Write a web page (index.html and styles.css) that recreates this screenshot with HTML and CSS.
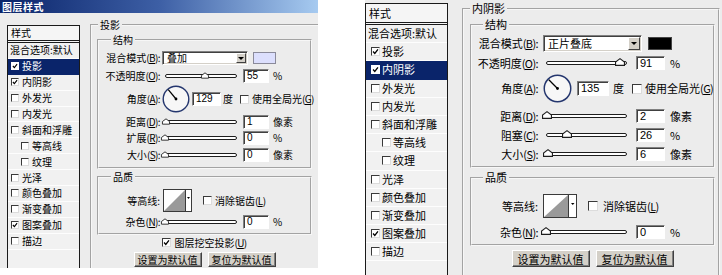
FILE: index.html
```html
<!DOCTYPE html>
<html lang="zh-CN">
<head>
<meta charset="utf-8">
<title>图层样式</title>
<link rel="stylesheet" href="styles.css">
</head>
<body>
<div class="page">
  <section class="dlg dlg-a">
    <div class="titlebar">图层样式</div>
    <div class="dlg-body">
      <div class="stylelist">
        <div class="sl-head">样式</div>
        <ul class="sl-items">
          <li class="sl-row plain">混合选项:默认</li>
          <li class="sl-row sel"><span class="cb"><svg viewBox="0 0 8 8"><path d="M1.2 4 L3.2 6.2 L6.8 1.6"/></svg></span>投影</li>
          <li class="sl-row"><span class="cb"><svg viewBox="0 0 8 8"><path d="M1.2 4 L3.2 6.2 L6.8 1.6"/></svg></span>内阴影</li>
          <li class="sl-row"><span class="cb"></span>外发光</li>
          <li class="sl-row"><span class="cb"></span>内发光</li>
          <li class="sl-row"><span class="cb"></span>斜面和浮雕</li>
          <li class="sl-row sub"><span class="cb"></span>等高线</li>
          <li class="sl-row sub"><span class="cb"></span>纹理</li>
          <li class="sl-row"><span class="cb"></span>光泽</li>
          <li class="sl-row"><span class="cb"></span>颜色叠加</li>
          <li class="sl-row"><span class="cb"></span>渐变叠加</li>
          <li class="sl-row"><span class="cb"><svg viewBox="0 0 8 8"><path d="M1.2 4 L3.2 6.2 L6.8 1.6"/></svg></span>图案叠加</li>
          <li class="sl-row"><span class="cb"></span>描边</li>
        </ul>
      </div>
      <fieldset class="grp outer">
        <legend>投影</legend>
        <fieldset class="grp box box-s">
          <legend>结构</legend>
          <div class="row r1"><span class="lbl">混合模式<span class="k">(<u>B</u>):</span></span><span class="select"><span class="sel-val">叠加</span><span class="drop"><i></i></span></span><span class="swatch sw-light"></span></div>
          <div class="row r2"><span class="lbl">不透明度<span class="k">(<u>O</u>):</span></span><span class="slider"><span class="rail"><span class="track"></span><svg class="thumb" style="left:55%" viewBox="0 0 9 7"><path d="M4.5 0.5 L8.5 3.5 V6.5 H0.5 V3.5 Z"/></svg></span></span><span class="num">55</span><span class="unit">%</span></div>
          <div class="row r3"><span class="lbl">角度<span class="k">(<u>A</u>):</span></span><svg class="dial" viewBox="0 0 28 28"><circle cx="14" cy="14" r="12.8"/><line x1="14" y1="14" x2="6.3" y2="4.6"/><circle class="dot" cx="14" cy="14" r="1.4"/></svg><span class="num num-ang">129</span><span class="unit u-deg">度</span><span class="cb opt-cb"></span><span class="opt-t">使用全局光<span class="k">(<u>G</u>)</span></span></div>
          <div class="row r4"><span class="lbl">距离<span class="k">(<u>D</u>):</span></span><span class="slider"><span class="rail"><span class="track"></span><svg class="thumb" style="left:1%" viewBox="0 0 9 7"><path d="M4.5 0.5 L8.5 3.5 V6.5 H0.5 V3.5 Z"/></svg></span></span><span class="num">1</span><span class="unit">像素</span></div>
          <div class="row r5"><span class="lbl">扩展<span class="k">(<u>R</u>):</span></span><span class="slider"><span class="rail"><span class="track"></span><svg class="thumb" style="left:0%" viewBox="0 0 9 7"><path d="M4.5 0.5 L8.5 3.5 V6.5 H0.5 V3.5 Z"/></svg></span></span><span class="num">0</span><span class="unit">%</span></div>
          <div class="row r6"><span class="lbl">大小<span class="k">(<u>S</u>):</span></span><span class="slider"><span class="rail"><span class="track"></span><svg class="thumb" style="left:0%" viewBox="0 0 9 7"><path d="M4.5 0.5 L8.5 3.5 V6.5 H0.5 V3.5 Z"/></svg></span></span><span class="num">0</span><span class="unit">像素</span></div>
        </fieldset>
        <fieldset class="grp box box-q">
          <legend>品质</legend>
          <div class="row q1"><span class="lbl">等高线:</span><svg class="contour" viewBox="0 0 29 23"><rect x="0.5" y="0.5" width="28" height="22" class="c-frame"/><polygon points="1,22 22,1 22,22" class="c-tri"/><line x1="22.5" y1="1" x2="22.5" y2="22" class="c-sep"/><polygon points="24,8 27,8 25.5,10" class="c-arr"/></svg><span class="cb opt-cb2"></span><span class="opt-t">消除锯齿<span class="k">(<u>L</u>)</span></span></div>
          <div class="row q2"><span class="lbl">杂色<span class="k">(<u>N</u>):</span></span><span class="slider"><span class="rail"><span class="track"></span><svg class="thumb" style="left:0%" viewBox="0 0 9 7"><path d="M4.5 0.5 L8.5 3.5 V6.5 H0.5 V3.5 Z"/></svg></span></span><span class="num">0</span><span class="unit">%</span></div>
        </fieldset>
        <div class="knock"><span class="cb"><svg viewBox="0 0 8 8"><path d="M1.2 4 L3.2 6.2 L6.8 1.6"/></svg></span><span class="opt-t">图层挖空投影<span class="k">(<u>U</u>)</span></span></div>
        <div class="btns"><button class="btn" type="button">设置为默认值</button><button class="btn" type="button">复位为默认值</button></div>
      </fieldset>
    </div>
  </section>

  <section class="dlg dlg-b">
    <div class="dlg-body">
      <div class="stylelist">
        <div class="sl-head">样式</div>
        <ul class="sl-items">
          <li class="sl-row plain">混合选项:默认</li>
          <li class="sl-row"><span class="cb"><svg viewBox="0 0 8 8"><path d="M1.2 4 L3.2 6.2 L6.8 1.6"/></svg></span>投影</li>
          <li class="sl-row sel"><span class="cb"><svg viewBox="0 0 8 8"><path d="M1.2 4 L3.2 6.2 L6.8 1.6"/></svg></span>内阴影</li>
          <li class="sl-row"><span class="cb"></span>外发光</li>
          <li class="sl-row"><span class="cb"></span>内发光</li>
          <li class="sl-row"><span class="cb"></span>斜面和浮雕</li>
          <li class="sl-row sub"><span class="cb"></span>等高线</li>
          <li class="sl-row sub"><span class="cb"></span>纹理</li>
          <li class="sl-row"><span class="cb"></span>光泽</li>
          <li class="sl-row"><span class="cb"></span>颜色叠加</li>
          <li class="sl-row"><span class="cb"></span>渐变叠加</li>
          <li class="sl-row"><span class="cb"><svg viewBox="0 0 8 8"><path d="M1.2 4 L3.2 6.2 L6.8 1.6"/></svg></span>图案叠加</li>
          <li class="sl-row"><span class="cb"></span>描边</li>
        </ul>
      </div>
      <fieldset class="grp outer">
        <legend>内阴影</legend>
        <fieldset class="grp box box-s">
          <legend>结构</legend>
          <div class="row r1"><span class="lbl">混合模式<span class="k">(<u>B</u>):</span></span><span class="select"><span class="sel-val">正片叠底</span><span class="drop"><i></i></span></span><span class="swatch sw-dark"></span></div>
          <div class="row r2"><span class="lbl">不透明度<span class="k">(<u>O</u>):</span></span><span class="slider"><span class="rail"><span class="track"></span><svg class="thumb" style="left:91%" viewBox="0 0 9 7"><path d="M4.5 0.5 L8.5 3.5 V6.5 H0.5 V3.5 Z"/></svg></span></span><span class="num">91</span><span class="unit">%</span></div>
          <div class="row r3"><span class="lbl">角度<span class="k">(<u>A</u>):</span></span><svg class="dial" viewBox="0 0 28 28"><circle cx="14" cy="14" r="12.8"/><line x1="14" y1="14" x2="5.6" y2="5.6"/><circle class="dot" cx="14" cy="14" r="1.4"/></svg><span class="num num-ang">135</span><span class="unit u-deg">度</span><span class="cb opt-cb"></span><span class="opt-t">使用全局光<span class="k">(<u>G</u>)</span></span></div>
          <div class="row r4"><span class="lbl">距离<span class="k">(<u>D</u>):</span></span><span class="slider"><span class="rail"><span class="track"></span><svg class="thumb" style="left:1%" viewBox="0 0 9 7"><path d="M4.5 0.5 L8.5 3.5 V6.5 H0.5 V3.5 Z"/></svg></span></span><span class="num">2</span><span class="unit">像素</span></div>
          <div class="row r5"><span class="lbl">阻塞<span class="k">(<u>C</u>):</span></span><span class="slider"><span class="rail"><span class="track"></span><svg class="thumb" style="left:26%" viewBox="0 0 9 7"><path d="M4.5 0.5 L8.5 3.5 V6.5 H0.5 V3.5 Z"/></svg></span></span><span class="num">26</span><span class="unit">%</span></div>
          <div class="row r6"><span class="lbl">大小<span class="k">(<u>S</u>):</span></span><span class="slider"><span class="rail"><span class="track"></span><svg class="thumb" style="left:3%" viewBox="0 0 9 7"><path d="M4.5 0.5 L8.5 3.5 V6.5 H0.5 V3.5 Z"/></svg></span></span><span class="num">6</span><span class="unit">像素</span></div>
        </fieldset>
        <fieldset class="grp box box-q">
          <legend>品质</legend>
          <div class="row q1"><span class="lbl">等高线:</span><svg class="contour" viewBox="0 0 34 24"><rect x="0.5" y="0.5" width="33" height="23" class="c-frame"/><polygon points="1,23 25,1 25,23" class="c-tri"/><line x1="25.5" y1="1" x2="25.5" y2="23" class="c-sep"/><polygon points="28,9 31.5,9 29.75,11" class="c-arr"/></svg><span class="cb opt-cb2"></span><span class="opt-t">消除锯齿<span class="k">(<u>L</u>)</span></span></div>
          <div class="row q2"><span class="lbl">杂色<span class="k">(<u>N</u>):</span></span><span class="slider"><span class="rail"><span class="track"></span><svg class="thumb" style="left:0%" viewBox="0 0 9 7"><path d="M4.5 0.5 L8.5 3.5 V6.5 H0.5 V3.5 Z"/></svg></span></span><span class="num">0</span><span class="unit">%</span></div>
        </fieldset>
        <div class="btns"><button class="btn" type="button">设置为默认值</button><button class="btn" type="button">复位为默认值</button></div>
      </fieldset>
    </div>
  </section>
</div>
</body>
</html>
```
FILE: styles.css
```css
* { box-sizing: border-box; }
html, body { margin: 0; padding: 0; background: #fff; }
body { font-family: "Noto Sans CJK SC", "Liberation Sans", sans-serif; color: #000; }

.page { display: flex; align-items: flex-start; width: 722px; height: 275px; overflow: hidden; }

.dlg { display: flex; flex-direction: column; flex: none; background: #ececec; overflow: hidden; }
.dlg-a { width: 318px; height: 268px; font-size: 10px; line-height: 12px; }
.dlg-b { width: 357px; height: 275px; margin-left: 47px; font-size: 11px; line-height: 13px; }

.titlebar {
  flex: none; height: 13px; padding-left: 2px;
  background: linear-gradient(90deg, #0a246a 0%, #3d5fa5 50%, #a6caf0 100%);
  color: #fff; font-weight: bold; font-size: 10px; line-height: 13px; letter-spacing: 0.5px;
}

.dlg-body { flex: 1; display: flex; align-items: stretch; min-height: 0; }
.dlg-a .dlg-body { padding: 6px 0 0 7px; }
.dlg-b .dlg-body { padding: 0 2px 0 0; }

.k { letter-spacing: -0.6px; }
.k u { text-decoration: underline; text-underline-offset: 1px; }

/* style list */
.stylelist { flex: none; display: flex; flex-direction: column; border: 1px solid #1a1a1a; border-bottom: none; background: #f1f1f1; }
.dlg-a .stylelist { width: 73px; margin-top: 6px; }
.dlg-b .stylelist { width: 83px; margin-top: 3px; }
.sl-head { border-bottom: 3px double #1a1a1a; padding-left: 3px; background: #f5f5f5; }
.dlg-a .sl-head { height: 17px; line-height: 14px; }
.dlg-b .sl-head { height: 21px; line-height: 18px; }
.sl-items { list-style: none; margin: 0; padding: 0; flex: 1; }
.sl-row { display: flex; align-items: center; white-space: nowrap; border-bottom: 1px solid #fdfdfd; }
.dlg-a .sl-row { height: 15.9px; padding-left: 3px; }
.dlg-b .sl-row { height: 18.2px; padding-left: 5px; }
.dlg-a .sl-row.sub { padding-left: 13px; }
.dlg-b .sl-row.sub { padding-left: 16px; }
.dlg-a .sl-row.plain, .dlg-b .sl-row.plain { padding-left: 2px; }
.dlg-a .sl-row .cb { margin-right: 3px; }
.dlg-b .sl-row .cb { margin-right: 2px; }
.sl-row.sel { background: #0a246a; color: #fff; border-bottom-color: #0a246a; }
.sl-row.sel .cb { border-color: #fff; }

/* checkbox */
.cb { display: inline-block; flex: none; background: #fff; border: 1px solid; border-color: #3a3a3a #dcdcdc #dcdcdc #3a3a3a; }
.dlg-a .cb { width: 8px; height: 8px; }
.dlg-b .cb { width: 9px; height: 9px; }
.cb svg { display: block; width: 100%; height: 100%; }
.cb path { fill: none; stroke: #000; stroke-width: 1.5; }

/* group boxes */
.grp { margin: 0; min-width: 0; border: 2px groove #f7f7f7; }
.grp > legend { padding: 0 2px; }
.outer { flex: 1; border-bottom: none; }
.dlg-a .outer { border-right: none; padding: 3px 6px 0 5px; margin-left: 10px; }
.dlg-b .outer { padding: 3px 3px 0 6px; margin-left: 14px; margin-top: 2px; }
.dlg-a .outer > legend { margin-left: 1px; }
.dlg-b .outer > legend { margin-left: 0; }
.dlg-a .box > legend { margin-left: 12px; }
.dlg-b .box > legend { margin-left: 11px; }

.dlg-a .box-s { padding: 5px 0 5px 0; }
.dlg-a .box-q { padding: 6px 0 4px 0; margin-top: 2px; }
.dlg-b .box-s { padding: 4px 0 5px 0; }
.dlg-b .box-q { padding: 10px 0 5px 0; margin-top: 3px; }

/* rows */
.row { display: flex; align-items: center; white-space: nowrap; }
.lbl { flex: none; text-align: right; }
.dlg-a .lbl { width: 61px; margin-right: 2px; }
.dlg-b .lbl { width: 66px; margin-right: 5px; }

.dlg-a .r1 { height: 14px; }
.dlg-a .r2 { height: 14px; margin-top: 4px; }
.dlg-a .r3 { height: 28px; margin-top: 2px; }
.dlg-a .r4 { height: 14px; margin-top: 2px; }
.dlg-a .r5 { height: 14px; margin-top: 2px; }
.dlg-a .r6 { height: 14px; margin-top: 3px; }
.dlg-a .q1 { height: 23px; }
.dlg-a .q2 { height: 14px; margin-top: 3px; }

.dlg-b .r1 { height: 17px; }
.dlg-b .r2 { height: 14px; margin-top: 4px; }
.dlg-b .r3 { height: 29px; margin-top: 4px; }
.dlg-b .r4 { height: 14px; margin-top: 6px; }
.dlg-b .r5 { height: 14px; margin-top: 5px; }
.dlg-b .r6 { height: 14px; margin-top: 5px; }
.dlg-b .q1 { height: 24px; }
.dlg-b .q2 { height: 14px; margin-top: 7px; }

/* select */
.select {
  flex: none; display: flex; align-items: stretch; height: 100%;
  background: #fff; border: 1px solid; border-color: #808080 #fff #fff #808080;
  box-shadow: inset 1px 1px 0 #404040, inset -1px -1px 0 #d4d0c8;
  padding: 1px;
}
.dlg-a .select { width: 86px; }
.dlg-b .select { width: 99px; }
.sel-val { flex: 1; padding-left: 3px; display: flex; align-items: center; }
.drop {
  flex: none; display: flex; align-items: center; justify-content: center;
  background: #d4d0c8; border: 1px solid; border-color: #fff #404040 #404040 #fff;
}
.dlg-a .drop { width: 10px; }
.dlg-b .drop { width: 12px; }
.drop i { display: block; width: 0; height: 0; border-left: 3px solid transparent; border-right: 3px solid transparent; border-top: 3px solid #000; }

.swatch { flex: none; border: 1px solid #8a8a9a; }
.dlg-a .swatch { width: 23px; height: 12px; margin-left: 5px; }
.dlg-b .swatch { width: 24px; height: 13px; margin-left: 6px; }
.sw-light { background: #dcdffd; }
.sw-dark { background: #000; border-color: #444; }

/* slider */
.slider { flex: none; display: flex; align-items: center; padding: 0 3px; }
.dlg-a .slider { width: 78px; }
.dlg-b .slider { width: 87px; }
.rail { position: relative; flex: 1; height: 4px; }
.track { display: block; height: 4px; border: 1px solid #1e1e1e; border-radius: 2px; background: #fff; }
.thumb { position: absolute; bottom: -1px; margin-left: -4px; overflow: visible; }
.dlg-a .thumb { width: 8px; height: 7px; }
.dlg-b .thumb { width: 10px; height: 8px; margin-left: -5px; }
.thumb path { fill: #fff; stroke: #1e1e1e; stroke-width: 1; }

/* number fields */
.num {
  flex: none; background: #fff; border: 1px solid; border-color: #808080 #fff #fff #808080;
  box-shadow: inset 1px 1px 0 #404040; padding-left: 3px; font-family: "Liberation Sans", sans-serif;
}
.dlg-a .num { width: 26px; height: 14px; line-height: 12px; margin-left: 3px; font-size: 10px; }
.dlg-b .num { width: 29px; height: 14px; line-height: 12px; margin-left: 6px; font-size: 11px; }
.dlg-a .num-ang { width: 29px; margin-left: 2px; }
.dlg-b .num-ang { width: 32px; height: 15px; margin-left: 5px; }
.unit { flex: none; margin-left: 4px; }
.dlg-b .unit { margin-left: 5px; }
.dlg-a .u-deg { margin-left: 2px; }
.dlg-b .u-deg { margin-left: 4px; }

.opt-t { flex: none; margin-left: 3px; }
.dlg-a .opt-cb { margin-left: 7px; width: 9px; height: 9px; }
.dlg-b .opt-cb { margin-left: 8px; width: 10px; height: 10px; }
.dlg-a .opt-cb2 { margin-left: 11px; width: 9px; height: 9px; }
.dlg-b .opt-cb2 { margin-left: 11px; width: 10px; height: 10px; }
.dlg-b .opt-cb2 + .opt-t { margin-left: 5px; }

/* dial */
.dial { flex: none; overflow: visible; }
.dlg-a .dial { width: 28px; height: 28px; }
.dlg-b .dial { width: 29px; height: 29px; }
.dial circle { fill: #f7f7f7; stroke: #24366e; stroke-width: 1.4; }
.dial line { stroke: #000; stroke-width: 1.2; }
.dial .dot { fill: #000; stroke: none; }

/* contour */
.contour { flex: none; }
.dlg-a .contour { width: 29px; height: 23px; margin-left: 1px; }
.dlg-b .contour { width: 34px; height: 24px; }
.c-frame { fill: #fff; stroke: #3a3a3a; stroke-width: 1; }
.c-tri { fill: #9a9a9a; }
.c-sep { stroke: #3a3a3a; stroke-width: 1; }
.c-arr { fill: #000; }

/* bottom */
.knock { display: flex; justify-content: center; align-items: center; height: 11px; margin-top: 2px; }
.dlg-a .knock .cb { width: 9px; height: 9px; }
.btns { display: flex; justify-content: center; gap: 6px; margin-top: 4px; }
.btn {
  font: inherit; color: #000; padding: 0; margin: 0; cursor: default;
  background: #d4d0c8; border: 1px solid; border-color: #fff #404040 #404040 #fff;
  box-shadow: inset -1px -1px 0 #808080;
}
.dlg-a .btn { width: 68px; height: 15px; line-height: 12px; }
.dlg-b .btn { width: 78px; height: 17px; line-height: 14px; }
```
